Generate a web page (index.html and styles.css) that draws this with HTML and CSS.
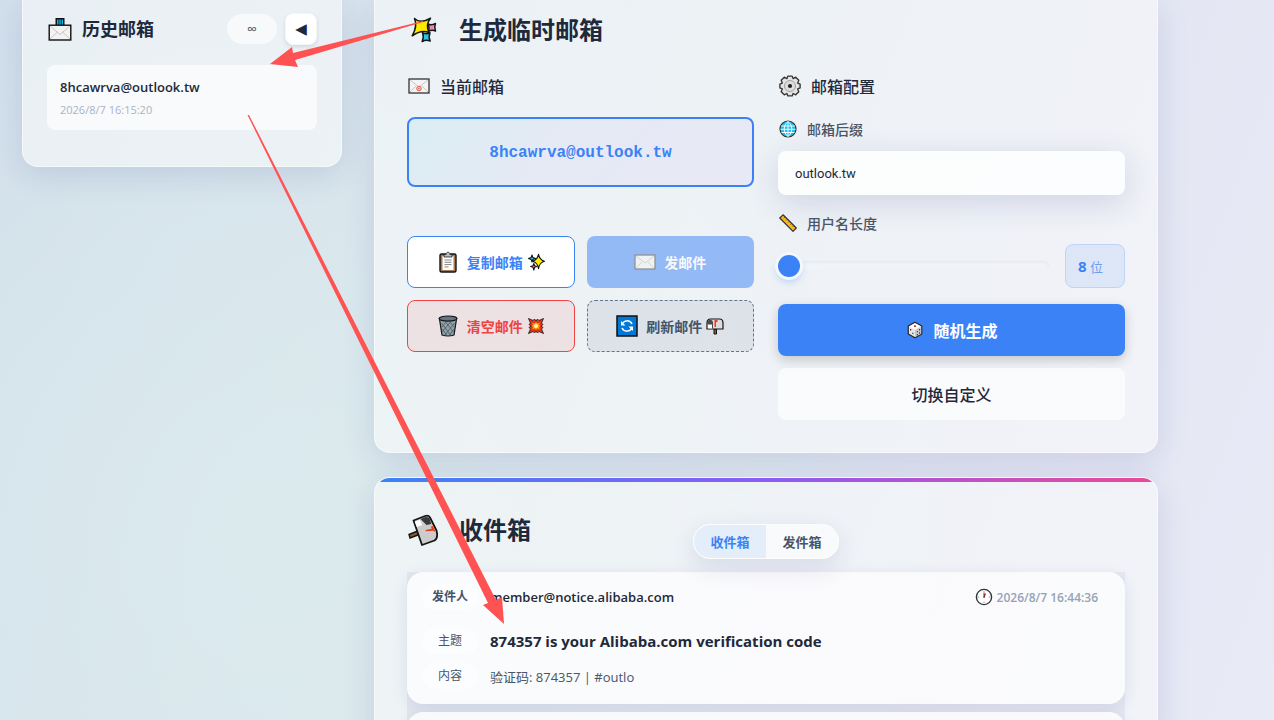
FILE: index.html
```html
<!DOCTYPE html>
<html lang="zh-CN">
<head>
  <meta charset="UTF-8">
  <title>临时邮箱</title>
  <meta name="viewport" content="width=device-width, initial-scale=1.0">
  <link rel="stylesheet" href="styles.css">
</head>
<body>
  <!-- icons -->
  <svg class="icon-defs" aria-hidden="true">
    <symbol id="i-outbox" viewBox="0 0 24 24">
      <path d="M7.500 1h9v9h-9z" fill="#111"/>
      <path d="M9 2.500h1.500V10H9zM11.300 2.500h1.500V10h-1.500zM13.600 2.500H15V10h-1.400z" fill="#00b7e8"/>
      <rect x="1.200" y="8.200" width="21.600" height="14.800" fill="#f3f3f3" stroke="#111" stroke-width="1.400"/>
      <path d="M2 9l10 8.500L22 9M2 22l7.500-7M22 22l-7.500-7" fill="none" stroke="#bbb" stroke-width=".8"/>
    </symbol>
    <symbol id="i-sparkles" viewBox="0 0 26 26">
      <g stroke="#151515" stroke-width="1.500" stroke-linejoin="round">
        <path d="M3.500 1.500C7 5 13 5 19.500 1.200 15.500 6 15.500 10 18 15.500 12 13 7 14.500 1.200 18.800 5 12 6 7 3.500 1.500z" fill="#ffea00"/>
        <path d="M17 7c2 1.200 4.500 1.200 7.500-.5-1.300 3-1.200 4.500 0 7.500-2.500-1.200-4.500-1-7 .3 1-2.800.8-4.800-.5-7.300z" fill="#f08cb4"/>
        <path d="M11.500 15.500c2 1.500 4.500 1.500 7.500.3-1.300 3-1.300 5.200.2 8.200-2.700-1.300-5-1.300-8 .5 1.500-3.200 1.500-5.800.3-9z" fill="#28c5ea"/>
      </g>
    </symbol>
    <symbol id="i-stars" viewBox="0 0 18 18">
      <g stroke="#151515" stroke-width="1.100" stroke-linejoin="round">
        <path d="M5 2l.9 2.600 2.600.9-2.600.9L5 9l-.9-2.600-2.600-.9 2.600-.9z" fill="#28c5ea"/>
        <path d="M6.800 10.500l.8 2.200 2.200.8-2.200.8-.8 2.700-.8-2.700-2.400-.8 2.400-.8z" fill="#f08cb4"/>
        <path d="M11.500 1.200q.8 5.700 6 7-5.200 1.300-6 7.500-.8-6.200-6-7.500 5.200-1.300 6-7z" fill="#ffee00"/>
      </g>
    </symbol>
    <symbol id="i-email" viewBox="0 0 22 16">
      <rect x="1" y="1" width="20" height="14" fill="#f4f4f4" stroke="#333" stroke-width="1.300"/>
      <path d="M2 2l9 7 9-7M2 14l6-6M20 14l-6-6" fill="none" stroke="#bbb" stroke-width=".8"/>
      <circle cx="11" cy="10.500" r="2.300" fill="#f6c9c2" stroke="#e8604c"/>
      <circle cx="11" cy="10.500" r=".8" fill="#e8604c"/>
    </symbol>
    <symbol id="i-envelope" viewBox="0 0 22 16">
      <rect x="1" y="1" width="20" height="14" fill="#f2f2f2" stroke="#333" stroke-width="1.300"/>
      <path d="M2 2l9 7 9-7M2 14l6-6M20 14l-6-6" fill="none" stroke="#aaa" stroke-width=".8"/>
    </symbol>
    <symbol id="i-gear" viewBox="0 0 20 20">
      <path d="M8 1h4l.8 2.300L15.200 2 18 4.800l-1 2.500 2.200.9v3.600l-2.200.9 1 2.500-2.800 2.800-2.400-1.200L12 19H8l-.8-2.200L4.800 18 2 15.200l1-2.500-2.200-.9V8.200L3 7.300 2 4.800 4.800 2l2.400 1.300z" fill="#e3e3e3" stroke="#333" stroke-width="1.200" stroke-linejoin="round"/>
      <circle cx="10" cy="10" r="5" fill="#ddd" stroke="#999" stroke-width=".8"/>
      <circle cx="10" cy="10" r="1.900" fill="#222"/>
    </symbol>
    <symbol id="i-globe" viewBox="0 0 18 18">
      <circle cx="9" cy="9" r="8" fill="#22bdf0" stroke="#333" stroke-width="1.200"/>
      <path d="M2 6h14M1.500 9.300h15M2.500 12.500h13M9 1.500v15M9 1.500c-5 4-5 11 0 15M9 1.500c5 4 5 11 0 15" fill="none" stroke="#fff" stroke-width=".9"/>
    </symbol>
    <symbol id="i-ruler" viewBox="0 0 18 18">
      <path d="M4 .8L17.300 14 14 17.300.8 4z" fill="#fbb917" stroke="#333" stroke-width="1.200" stroke-linejoin="round"/>
      <path d="M6 3L4.800 4.200M8.200 5.200L7 6.400M10.400 7.400L9.200 8.600M12.600 9.600l-1.200 1.200M14.800 11.800L13.600 13" stroke="#7a5200" stroke-width=".7"/>
    </symbol>
    <symbol id="i-clipboard" viewBox="0 0 20 22">
      <rect x="2" y="3" width="16" height="18" rx="1.500" fill="#a87a55" stroke="#151515" stroke-width="1.400"/>
      <path d="M4.500 5h11v14h-11z" fill="#fff"/>
      <path d="M6 3.500h2c0-3 4-3 4 0h2V6H6z" fill="#bbb" stroke="#222" stroke-width=".8"/>
      <path d="M6.500 9h7M6.500 11.300h7M6.500 13.600h7M6.500 15.900h4" stroke="#777" stroke-width=".9"/>
    </symbol>
    <symbol id="i-trash" viewBox="0 0 20 22">
      <path d="M1.500 4h17L16 20q-6 2-12 0z" fill="#90a4ad" stroke="#151515" stroke-width="1.200"/>
      <path d="M3.500 8l9 12M7.500 7l8 10M12 7l4.500 5.500M4.500 14l4 6M16.500 8L7 20M12.500 7L4 17M8 7l-4 5M16 14l-4.500 6" stroke="#47555c" stroke-width=".8"/>
      <ellipse cx="10" cy="3.600" rx="9" ry="2.600" fill="#66767e" stroke="#151515" stroke-width="1.200"/>
    </symbol>
    <symbol id="i-boom" viewBox="0 0 18 18">
      <path d="M1.500 1.500l4.500 2L7.500 2 9 4l1.500-2L12 3.500l4.500-2-2 4.500L16 7.500 14 9l2 1.500-1.500 1.500 2 4.500-4.500-2-1.500 1.500L9 14l-1.500 2L6 14.500l-4.500 2 2-4.500L2 10.500 4 9 2 7.500 3.500 6z" fill="#e8321c" stroke="#222" stroke-width=".9"/>
      <path d="M9 5l1.300 1.500 2.500-.8-.8 2.300 1.300 1-1.300 1 .8 2.300-2.500-.8L9 13l-1.300-1.500-2.500.8.800-2.300-1.300-1 1.300-1-.8-2.300 2.500.8z" fill="#ffa000"/>
      <circle cx="9" cy="9" r="2" fill="#fff6b0"/>
    </symbol>
    <symbol id="i-refresh" viewBox="0 0 22 22">
      <path d="M1 1h20v20H1z" fill="#0078d7" stroke="#111" stroke-width="1.500"/>
      <path d="M6 9.500A5.400 5.400 0 0 1 16 9M16 12.500A5.400 5.400 0 0 1 6 13" fill="none" stroke="#fff" stroke-width="1.500"/>
      <path d="M5 6v4.500h4.500zM17 16v-4.500h-4.500z" fill="#fff"/>
    </symbol>
    <symbol id="i-mailbox" viewBox="0 0 18 18">
      <path d="M8 12h2.500v5H8z" fill="#8a5a35" stroke="#151515"/>
      <path d="M4.500 2h9Q17 2 17 6v6H1V6q0-4 3.500-4z" fill="#dcdcdc" stroke="#151515" stroke-width="1.200"/>
      <path d="M1.600 11.300V6q0-3 2.600-3.300Q7 3 7 6v5.300z" fill="#4a4a4a"/>
      <path d="M1.800 7.500H6v3.900H1.800z" fill="#fff"/>
      <path d="M8.500 3h3v2H10v5H8.500z" fill="#f03a17"/>
    </symbol>
    <symbol id="i-mailbox-tilt" viewBox="0 0 30 32">
      <path d="M1 20.500l10-4 1.500 3.500-10.500 4z" fill="#8a5a35" stroke="#151515" stroke-width="1.400"/>
      <path d="M5.500 6.500L17 2q3.500-1 5 1.500l6.500 13q2 7.500-2 10L14 31z" fill="#ccc" stroke="#151515" stroke-width="1.800" stroke-linejoin="round"/>
      <path d="M12.500 5l5-2q3-.5 4 1.500l1.800 5.500-4.800 1z" fill="#3a3a3a"/>
      <path d="M6.800 7.700l5-2 2.500 5.300-5.500 2z" fill="#fff"/>
      <path d="M17.500 16l6.300-1.200-1-2.300 2-.5 2.700 6-2.500-1.300-7 .5z" fill="#f03a17"/>
    </symbol>
    <symbol id="i-dice" viewBox="0 0 18 20">
      <path d="M9 1.500l7.500 4v9L9 18.500l-7.500-4v-9z" fill="#e6e6e6" stroke="#222" stroke-width="1.300" stroke-linejoin="round"/>
      <path d="M2.500 6L9 2.500 15.500 6 9 9.500z" fill="#fff"/>
      <path d="M9 10l6.800-3.700v8L9 17.800z" fill="#c9c9c9"/>
      <ellipse cx="9" cy="5.800" rx="1.400" ry="1" fill="#d92b2b"/>
      <path d="M3.500 9h1.300v1.500H3.500zM6 13h1.300v1.500H6zM11 11h1.200v1.500H11zM13.500 9h1.200v1.500h-1.200zM11 14.500h1.200V16H11zM13.500 12.600h1.200v1.500h-1.200z" fill="#333"/>
    </symbol>
    <symbol id="i-clock" viewBox="0 0 18 18">
      <circle cx="9" cy="9" r="7.600" fill="#fff" stroke="#333" stroke-width="1.400"/>
      <path d="M9 3v1.200M9 13.800V15M3 9h1.200M13.800 9H15" stroke="#999"/>
      <path d="M9 9.500l1.300-4" stroke="#222" stroke-width="1.200"/>
      <path d="M9 10V4.500" stroke="#e02b2b" stroke-width="1.100"/>
    </symbol>
  </svg>

  <div class="layout">
    <aside class="card history">
      <div class="history-header">
        <svg class="icon-24"><use href="#i-outbox"/></svg>
        <h2>历史邮箱</h2>
        <span class="count">∞</span>
        <button class="toggle" type="button" aria-label="收起">◀</button>
      </div>
      <a class="history-item" href="#">
        <span class="history-mail">8hcawrva@outlook.tw</span>
        <span class="history-time">2026/8/7 16:15:20</span>
      </a>
    </aside>

    <main class="main">
      <section class="card generator">
        <div class="title">
          <svg class="title-icon"><use href="#i-sparkles"/></svg>
          <h1>生成临时邮箱</h1>
        </div>
        <div class="columns">
          <div class="current">
            <h3><svg class="icon-22"><use href="#i-email"/></svg>当前邮箱</h3>
            <div class="email-box">8hcawrva@outlook.tw</div>
            <div class="actions">
              <button class="btn btn-copy" type="button"><svg class="icon-22"><use href="#i-clipboard"/></svg><span>复制邮箱</span><svg class="icon-18"><use href="#i-stars"/></svg></button>
              <button class="btn btn-send" type="button" disabled><svg class="icon-22"><use href="#i-envelope"/></svg><span>发邮件</span></button>
              <button class="btn btn-clear" type="button"><svg class="icon-22"><use href="#i-trash"/></svg><span>清空邮件</span><svg class="icon-18"><use href="#i-boom"/></svg></button>
              <button class="btn btn-refresh" type="button"><svg class="icon-22"><use href="#i-refresh"/></svg><span>刷新邮件</span><svg class="icon-18"><use href="#i-mailbox"/></svg></button>
            </div>
          </div>
          <div class="config">
            <h3><svg class="icon-22"><use href="#i-gear"/></svg>邮箱配置</h3>
            <label class="field-label" for="domain"><svg class="icon-20"><use href="#i-globe"/></svg>邮箱后缀</label>
            <select id="domain" class="domain">
              <option>outlook.tw</option>
            </select>
            <label class="field-label" for="length"><svg class="icon-20"><use href="#i-ruler"/></svg>用户名长度</label>
            <div class="length-row">
              <input id="length" class="slider" type="range" min="8" max="30" value="8">
              <output class="length-value" for="length"><b>8</b> 位</output>
            </div>
            <button class="btn btn-random" type="button"><svg class="icon-20"><use href="#i-dice"/></svg><span>随机生成</span></button>
            <button class="btn btn-custom" type="button">切换自定义</button>
          </div>
        </div>
      </section>

      <section class="card inbox">
        <div class="inbox-header">
          <div class="title">
            <svg class="title-icon"><use href="#i-mailbox-tilt"/></svg>
            <h1>收件箱</h1>
          </div>
          <div class="tabs">
            <button class="tab active" type="button">收件箱</button>
            <button class="tab" type="button">发件箱</button>
          </div>
        </div>
        <div class="mail-list">
          <article class="mail">
            <div class="mail-row">
              <span class="tag tag-from">发件人</span>
              <span class="from">member@notice.alibaba.com</span>
              <span class="time"><svg class="icon-18"><use href="#i-clock"/></svg>2026/8/7 16:44:36</span>
            </div>
            <div class="mail-row row-subject">
              <span class="tag">主题</span>
              <span class="subject">874357 is your Alibaba.com verification code</span>
            </div>
            <div class="mail-row">
              <span class="tag">内容</span>
              <span class="preview">验证码: 874357 | #outlo</span>
            </div>
          </article>
          <article class="mail"></article>
        </div>
      </section>
    </main>
  </div>

  <!-- red guide arrows -->
  <svg class="arrows" width="1274" height="720" aria-hidden="true">
    <path d="M423 21L293 53 292 47 270 64 298 67 295 60 423 22z"/>
    <path d="M247.500 115L488 603 483 605 504 624 502 597 496 600 249 115z"/>
  </svg>
</body>
</html>
```
FILE: styles.css
```css
* {
  box-sizing: border-box;
}
body {
  margin: 0;
  height: 100vh;
  overflow: hidden;
  font-family: "Open Sans", "Noto Sans CJK SC", sans-serif;
  font-size: 14px;
  color: #1e293b;
  background:
    radial-gradient(circle at 22% 75%, rgba(222, 240, 238, 0.6), transparent 60%),
    linear-gradient(110deg, #d1deeb 0%, #dbe5ee 45%, #e4e7f3 75%, #e8eaf6 100%);
}
h1, h2, h3 {
  margin: 0;
}
button, select, input {
  font-family: inherit;
}
button {
  cursor: pointer;
}
.icon-defs {
  position: absolute;
  width: 0;
  height: 0;
}
.icon-18 {
  width: 18px;
  height: 18px;
}
.icon-20 {
  width: 20px;
  height: 18px;
}
.icon-22 {
  width: 22px;
  height: 22px;
}
.icon-24 {
  width: 26px;
  height: 24px;
}
.layout {
  display: grid;
  grid-template-columns: 320px minmax(0, 1fr);
  align-items: start;
  gap: 32px;
  padding: 0 116px 0 22px;
}
.card {
  background: rgba(248, 250, 250, 0.6);
  border: 1px solid rgba(255, 255, 255, 0.5);
  border-radius: 16px;
  box-shadow: 0 8px 32px rgba(31, 38, 135, 0.13);
}

/* history */
.history {
  border-top: 0;
  border-radius: 0 0 16px 16px;
  padding: 13px 24px 36px;
}
.history-header {
  display: flex;
  align-items: center;
  margin-bottom: 20px;
}
.history-header h2 {
  flex: 1;
  margin-left: 9px;
  font-size: 18px;
  line-height: 32px;
}
.count {
  width: 50px;
  line-height: 30px;
  margin-right: 8px;
  border-radius: 15px;
  text-align: center;
  font-size: 14px;
  color: #475569;
  background: rgba(255, 255, 255, 0.6);
}
.toggle {
  width: 32px;
  height: 32px;
  padding: 0;
  border: 1px solid #f4f7fa;
  border-radius: 8px;
  background: #fff;
  color: #1e293b;
  font-family: "DejaVu Sans", sans-serif;
  font-size: 15px;
  box-shadow: 0 2px 4px rgba(0, 0, 0, 0.1);
}
.history-item {
  display: block;
  padding: 12px 13px;
  border-radius: 8px;
  background: rgba(255, 255, 255, 0.65);
  text-decoration: none;
}
.history-mail, .history-time {
  display: block;
}
.history-mail {
  font-size: 13px;
  font-weight: 600;
  line-height: 20px;
  color: #1e293b;
}
.history-time {
  margin-top: 4px;
  font-size: 11px;
  line-height: 17px;
  color: #a9b4c4;
}

/* generator */
.generator {
  border-top: 0;
  border-radius: 0 0 16px 16px;
  padding: 12px 32px 32px;
}
.title {
  display: flex;
  align-items: center;
  gap: 20px;
}
.title h1 {
  font-size: 24px;
  line-height: 36px;
}
.title-icon {
  width: 32px;
  height: 32px;
}
.generator .title-icon {
  width: 34px;
  height: 26px;
  margin-right: -2px;
}
.columns {
  display: grid;
  grid-template-columns: 1fr 1fr;
  gap: 24px;
  margin-top: 26px;
}
.columns h3 {
  display: flex;
  align-items: center;
  gap: 10px;
  height: 24px;
  padding-left: 1px;
  font-size: 16px;
  font-weight: 500;
}
.email-box {
  margin: 19px 0 49px;
  padding: 22px 21px 20px;
  border: 2px solid #3b82f6;
  border-radius: 8px;
  background: linear-gradient(135deg, rgba(6, 182, 212, 0.07), rgba(99, 102, 241, 0.06) 40%, rgba(168, 85, 247, 0.06));
  text-align: center;
  font-family: "Liberation Mono", monospace;
  font-size: 16px;
  font-weight: 700;
  line-height: 24px;
  color: #3b82f6;
}
.actions {
  display: grid;
  grid-template-columns: 1fr 1fr;
  gap: 12px;
}
.btn {
  display: flex;
  align-items: center;
  justify-content: center;
  width: 100%;
  height: 52px;
  padding: 0;
  border-radius: 8px;
  font-size: 14px;
  font-weight: 700;
}
.btn span {
  margin-left: 8px;
}
.btn span + svg {
  margin-left: 4px;
}
.btn-copy {
  border: 1px solid #3b82f6;
  background: #fff;
  color: #3b82f6;
}
.btn-send {
  border: 0;
  background: #3b82f6;
  color: #fff;
  opacity: 0.5;
}
.btn-clear {
  border: 1px solid #ef4444;
  background: rgba(239, 68, 68, 0.1);
  color: #ef4444;
}
.btn-refresh {
  border: 1px dashed #64748b;
  background: rgba(100, 116, 139, 0.12);
  color: #475569;
}
.field-label {
  display: flex;
  align-items: center;
  gap: 9px;
  height: 20px;
  font-size: 14px;
  font-weight: 500;
  color: #475569;
}
.columns h3 + .field-label {
  margin-top: 21px;
}
.domain {
  display: block;
  appearance: none;
  width: 100%;
  height: 44px;
  margin: 12px 0 18px;
  padding: 0 17px;
  border: 0;
  border-radius: 8px;
  background: rgba(255, 255, 255, 0.8);
  color: #1e293b;
  font-family: Roboto, sans-serif;
  font-size: 13px;
  box-shadow: 0 8px 32px rgba(31, 38, 135, 0.15);
}
.length-row {
  display: flex;
  align-items: center;
  gap: 16px;
  height: 44px;
  margin: 11px 0 16px;
}
.slider {
  flex: 1;
  min-width: 0;
  height: 10px;
  margin: 0;
  appearance: none;
  border-radius: 5px;
  background: rgba(255, 255, 255, 0.12);
  box-shadow: inset 0 1px 3px rgba(0, 0, 0, 0.06);
}
.slider::-webkit-slider-thumb {
  appearance: none;
  width: 22px;
  height: 22px;
  border-radius: 50%;
  background: #3b82f6;
  box-shadow: 0 0 0 3px #f4f8fc, 0 4px 8px rgba(59, 130, 246, 0.4);
}
.length-value {
  width: 60px;
  height: 44px;
  padding-left: 12px;
  line-height: 42px;
  border: 1px solid #bfd3f7;
  border-radius: 8px;
  background: rgba(59, 130, 246, 0.1);
  color: #6c9df0;
  font-size: 13px;
}
.length-value b {
  font-size: 15px;
  color: #3b82f6;
}
.btn-random {
  border: 0;
  background: #3b82f6;
  color: #fff;
  font-size: 16px;
  box-shadow: 0 4px 12px rgba(0, 0, 0, 0.18);
}
.btn-custom {
  margin-top: 12px;
  border: 0;
  background: rgba(255, 255, 255, 0.65);
  color: #1e293b;
  font-size: 16px;
  font-weight: 500;
}

/* inbox */
.inbox {
  margin-top: 24px;
  padding: 0 32px 32px;
  overflow: hidden;
}
.inbox::before {
  content: "";
  display: block;
  height: 4px;
  margin: 0 -32px 27px;
  background: linear-gradient(90deg, #3b82f6, #8b5cf6 50%, #ec4899);
}
.inbox-header {
  display: grid;
  grid-template-columns: 1fr auto 1fr;
  align-items: end;
  height: 50px;
}
.inbox-header .title {
  align-self: start;
  height: 42px;
}
.tabs {
  display: flex;
  height: 35px;
  border: 1px solid rgba(255, 255, 255, 0.6);
  border-radius: 18px;
  overflow: hidden;
  background: rgba(255, 255, 255, 0.6);
  box-shadow: 0 8px 24px rgba(31, 38, 135, 0.12);
}
.tab {
  width: 72px;
  padding: 0;
  border: 0;
  background: none;
  color: #475569;
  font-size: 13px;
  font-weight: 700;
}
.tab.active {
  background: rgba(59, 130, 246, 0.1);
  color: #3b82f6;
}
.mail-list {
  margin-top: 13px;
  background: rgba(99, 102, 160, 0.08);
}
.mail {
  min-height: 132px;
  margin-bottom: 8px;
  padding: 12px 27px 14px 15px;
  border-radius: 16px;
  background: rgba(255, 255, 255, 0.8);
  box-shadow: 0 4px 16px rgba(31, 38, 135, 0.1);
}
.mail-row {
  display: flex;
  align-items: center;
  height: 26px;
}
.row-subject {
  margin: 18px 0 9px;
}
.tag {
  width: 56px;
  margin-right: 12px;
  border-radius: 13px;
  background: rgba(255, 255, 255, 0.5);
  text-align: center;
  font-size: 12px;
  line-height: 26px;
  color: #475569;
}
.tag-from {
  font-weight: 700;
}
.from {
  flex: 1;
  font-size: 13px;
  font-weight: 600;
}
.time {
  display: flex;
  align-items: center;
  gap: 4px;
  font-size: 12px;
  font-weight: 600;
  color: #94a3b8;
}
.subject {
  font-size: 15px;
  font-weight: 700;
}
.preview {
  font-size: 13px;
  color: #475569;
}

/* arrows */
.arrows {
  position: absolute;
  top: 0;
  left: 0;
  fill: #ff5252;
  pointer-events: none;
}
```
